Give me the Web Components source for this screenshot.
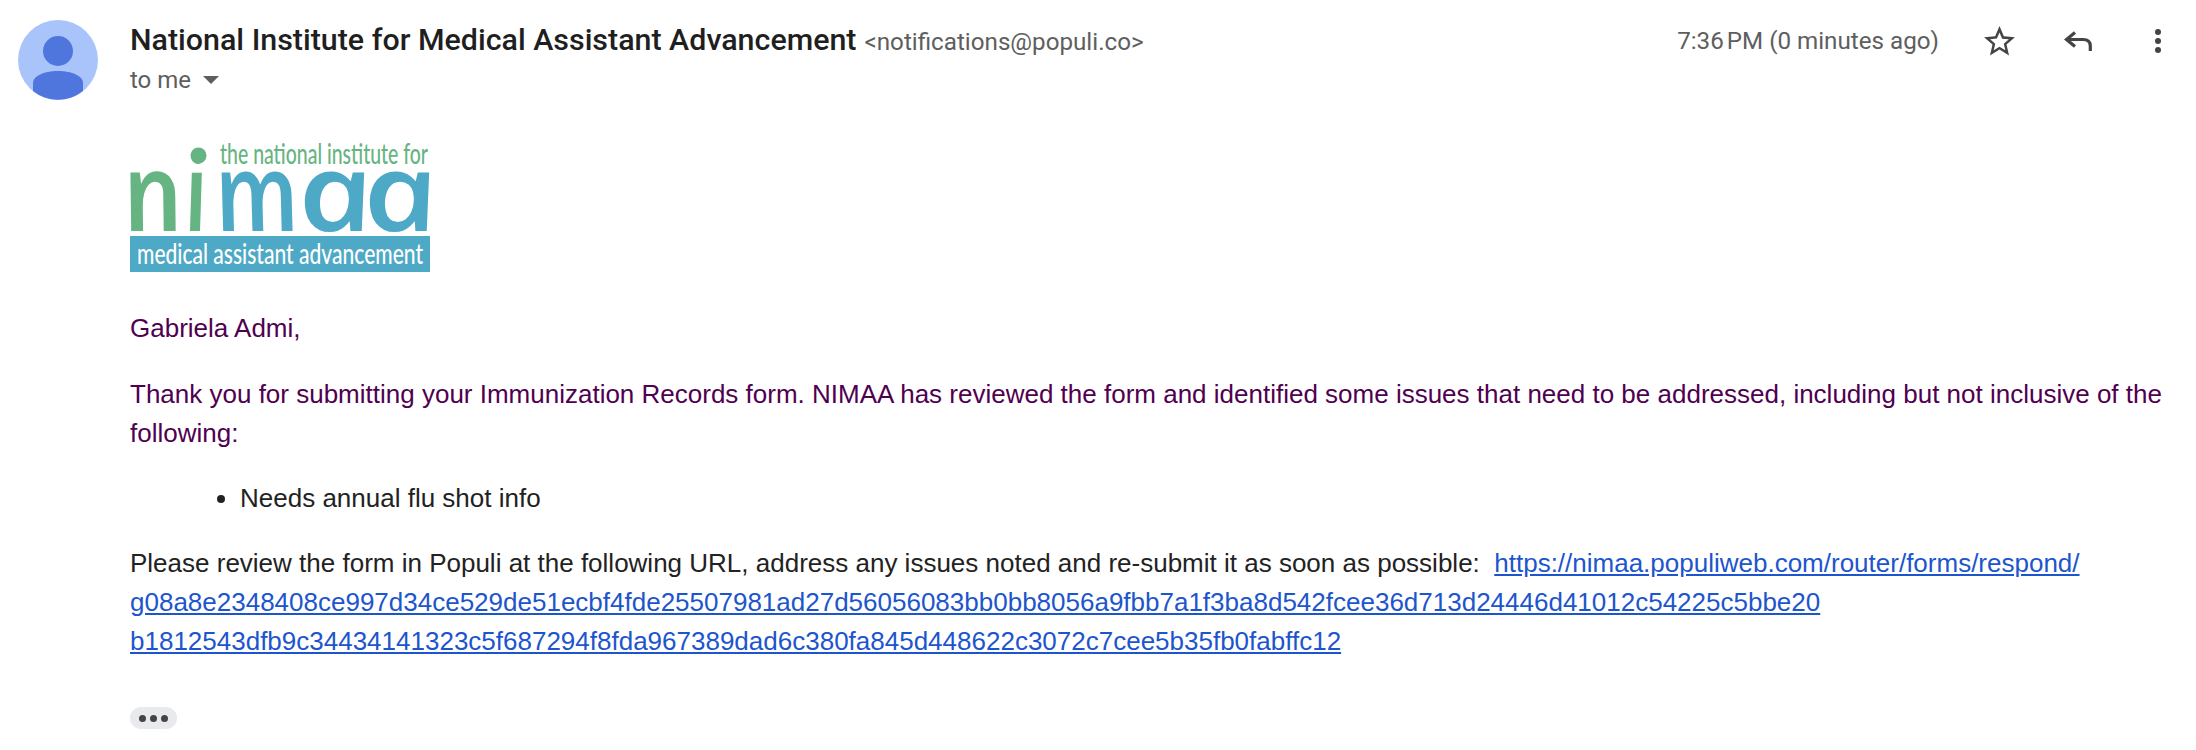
<!DOCTYPE html>
<html>
<head>
<meta charset="utf-8">
<title>Mail</title>
<style>
  html, body { margin: 0; background: #fff; }
</style>
</head>
<body>
<mail-message>
  <mail-header slot="header" name="National Institute for Medical Assistant Advancement" email="&lt;notifications@populi.co&gt;" time="7:36&#8239;PM (0 minutes ago)" to="to me"></mail-header>
  <nimaa-logo></nimaa-logo>
  <mail-para tone="quoted" class="first">Gabriela Admi,</mail-para>
  <mail-para tone="quoted">Thank you for submitting your Immunization Records form. NIMAA has reviewed the form and identified some issues that need to be addressed, including but not inclusive of the following:</mail-para>
  <mail-list><li>Needs annual flu shot info</li></mail-list>
  <mail-para>Please review the form in Populi at the following URL, address any issues noted and re-submit it as soon as possible:&nbsp; <mail-link>https://nimaa.populiweb.com/router/forms/respond/<br>g08a8e2348408ce997d34ce529de51ecbf4fde25507981ad27d56056083bb0bb8056a9fbb7a1f3ba8d542fcee36d713d24446d41012c54225c5bbe20<br>b1812543dfb9c34434141323c5f687294f8fda967389dad6c380fa845d448622c3072c7cee5b35fb0fabffc12</mail-link></mail-para>
  <trim-toggle></trim-toggle>
</mail-message>

<script>
class MailMessage extends HTMLElement {
  constructor() {
    super()
    this.attachShadow({ mode: 'open' })
    this.shadowRoot.innerHTML = `
      <style>
        :host { display: block; width: 2196px; height: 750px; overflow: hidden; box-sizing: border-box; padding-top: 20px; background: #fff; }
        .body { display: flex; flex-direction: column; padding: 30px 30px 0 130px; font: 26px/39px "Liberation Sans", Arial, sans-serif; color: #222; }
      </style>
      <slot name="header"></slot>
      <div class="body"><slot></slot></div>
    `
  }
}

class MailHeader extends HTMLElement {
  constructor() {
    super()
    this.attachShadow({ mode: 'open' })
    const attr = n => this.getAttribute(n)
    this.shadowRoot.innerHTML = `
      <style>
        :host { display: flex; align-items: flex-start; height: 80px; padding-left: 18px; font-family: Roboto, "Noto Sans", sans-serif; color: #5e5e5e; }
        .avatar { width: 80px; height: 80px; flex: none; margin-right: 32px; }
        .who { flex: 1; padding-top: 1px; }
        .line { display: flex; align-items: baseline; gap: 8px; line-height: 38px; }
        .name { font-size: 30.4px; font-weight: 500; color: #1f1f1f; }
        .email { font-size: 24.2px; color: #5e5e5e; }
        .to { display: flex; align-items: center; gap: 12px; font-size: 24px; line-height: 38px; }
        .meta { display: flex; align-items: center; height: 42px; padding-right: 34px; font-size: 24.2px; }
        .meta svg { display: block; flex: none; }
        .star { margin-left: 42px; }
        .reply { margin-left: 46px; }
        .more { margin-left: 62px; }
      </style>
      <svg class="avatar" viewBox="0 0 80 80">
        <circle cx="40" cy="40" r="40" fill="#a8c4fb"/>
        <ellipse cx="40" cy="31" rx="15" ry="15" fill="#4f76dc"/>
        <path d="M15 71V63C15 56 26 51 40 51S65 56 65 63V71A40 40 0 0 1 15 71Z" fill="#4f76dc"/>
      </svg>
      <div class="who">
        <div class="line"><span class="name">${attr('name')}</span><span class="email">${attr('email').replace('<', '&lt;')}</span></div>
        <div class="to"><span>${attr('to')}</span><svg width="16" height="8" viewBox="0 0 16 8"><path d="M0 0H16L8 8Z" fill="#5e5e5e"/></svg></div>
      </div>
      <div class="meta">
        <span>${attr('time')}</span>
        <svg class="star" width="37" height="37" viewBox="0 0 24 24"><path d="M22 9.24l-7.19-.62L12 2 9.19 8.63 2 9.24l5.46 4.73L5.82 21 12 17.27 18.18 21l-1.63-7.03L22 9.24zM12 15.4l-3.76 2.27 1-4.28-3.32-2.88 4.38-.38L12 6.1l1.71 4.04 4.38.38-3.32 2.88 1 4.28L12 15.4z" fill="#444"/></svg>
        <svg class="reply" width="28" height="20" viewBox="0 0 28 20"><path d="M11 1.5L2.5 8.5L11 15.5M3 8.5H19Q26.3 8.5 26.3 15V20" fill="none" stroke="#444" stroke-width="3.2"/></svg>
        <svg class="more" width="8" height="26" viewBox="0 0 8 26"><circle cx="4" cy="4" r="3" fill="#444"/><circle cx="4" cy="13" r="3" fill="#444"/><circle cx="4" cy="22" r="3" fill="#444"/></svg>
      </div>
    `
  }
}

class NimaaLogo extends HTMLElement {
  constructor() {
    super()
    this.attachShadow({ mode: 'open' })
    this.shadowRoot.innerHTML = `
      <style>
        :host { display: block; width: 320px; height: 150px; margin-bottom: 29px; }
        svg { display: block; overflow: visible; }
        text { font-family: "Open Sans", sans-serif; }
        .big { font-size: 108px; font-style: italic; font-weight: 600; }
        .green { fill: #66b481; }
        .blue { fill: #4ea9c6; }
        .small { font-family: Lato, sans-serif; font-weight: 500; }
      </style>
      <svg width="320" height="150" viewBox="0 0 320 150">
        <text class="small green" x="90" y="34" font-size="28" textLength="208" lengthAdjust="spacingAndGlyphs">the national institute for</text>
        <text class="big green" transform="translate(-1 101) skewX(12)" textLength="60" lengthAdjust="spacingAndGlyphs">n</text>
        <text class="big green" transform="translate(58 101) skewX(8)" textLength="24" lengthAdjust="spacingAndGlyphs">i</text>
        <circle class="green" cx="68.5" cy="25.5" r="8"/>
        <text class="big blue" transform="translate(91 101) skewX(12)" textLength="84" lengthAdjust="spacingAndGlyphs">m</text>
        <text class="big blue" transform="translate(174 101) skewX(12)" textLength="75" lengthAdjust="spacingAndGlyphs">a</text>
        <text class="big blue" transform="translate(239 101) skewX(12)" textLength="75" lengthAdjust="spacingAndGlyphs">a</text>
        <rect class="blue" x="0" y="106" width="300" height="36"/>
        <text class="small" x="7" y="134" font-size="28" fill="#fff" textLength="286" lengthAdjust="spacingAndGlyphs">medical assistant advancement</text>
      </svg>
    `
  }
}

class MailPara extends HTMLElement {
  constructor() {
    super()
    this.attachShadow({ mode: 'open' })
    this.shadowRoot.innerHTML = `
      <style>
        :host { display: block; margin-bottom: 26px; }
        :host(.first) { margin-bottom: 27px; }
        :host([tone="quoted"]) { color: #500050; }
      </style>
      <slot></slot>
    `
  }
}

class MailList extends HTMLElement {
  constructor() {
    super()
    this.attachShadow({ mode: 'open' })
    this.shadowRoot.innerHTML = `
      <style>
        :host { display: block; margin-bottom: 26px; padding-left: 110px; color: #222; }
        ul { margin: 0; padding: 0; }
      </style>
      <ul><slot></slot></ul>
    `
  }
}

class MailLink extends HTMLElement {
  constructor() {
    super()
    this.attachShadow({ mode: 'open' })
    this.shadowRoot.innerHTML = `
      <style>
        :host { display: inline; color: #1c55cd; text-decoration: underline; }
      </style>
      <slot></slot>
    `
  }
}

class TrimToggle extends HTMLElement {
  constructor() {
    super()
    this.attachShadow({ mode: 'open' })
    this.shadowRoot.innerHTML = `
      <style>
        :host { display: flex; align-items: center; justify-content: center; gap: 4px; width: 47px; height: 22px; margin-top: 20px; border-radius: 11px; background: #e8eaed; }
        i { display: block; width: 7px; height: 7px; border-radius: 50%; background: #444; }
      </style>
      <i></i><i></i><i></i>
    `
  }
}

customElements.define('mail-message', MailMessage)
customElements.define('mail-header', MailHeader)
customElements.define('nimaa-logo', NimaaLogo)
customElements.define('mail-para', MailPara)
customElements.define('mail-list', MailList)
customElements.define('mail-link', MailLink)
customElements.define('trim-toggle', TrimToggle)
</script>
</body>
</html>
